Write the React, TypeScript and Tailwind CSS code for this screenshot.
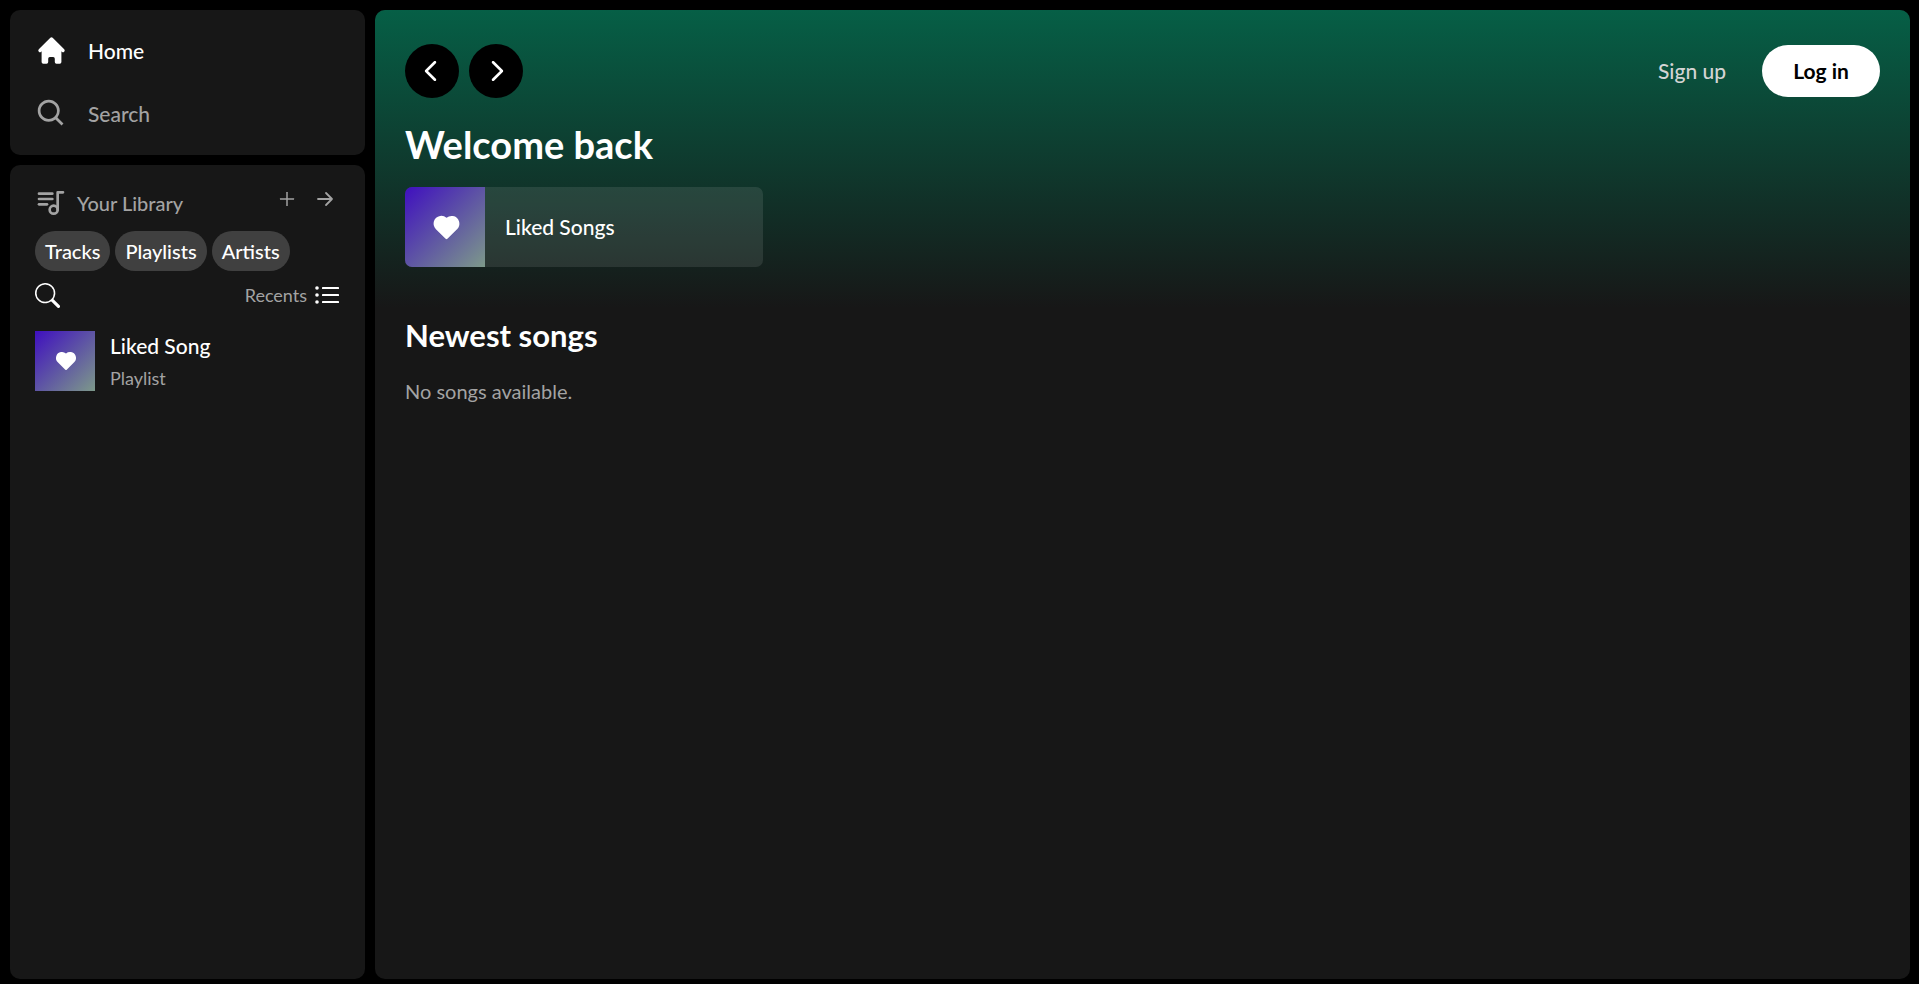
import React from "react";
import { HiHome } from "react-icons/hi";
import { BiSearch } from "react-icons/bi";
import { TbPlaylist, TbHeartFilled } from "react-icons/tb";
import { AiOutlinePlus } from "react-icons/ai";
import { BsSearch } from "react-icons/bs";
import { RxCaretLeft, RxCaretRight } from "react-icons/rx";

const filters = ["Tracks", "Playlists", "Artists"];
const panel = "rounded-[10px] bg-[#171717]";
const cover =
  "flex shrink-0 items-center justify-center bg-linear-to-br/srgb from-[#3f0fbf] to-[#7d998a] pl-[2px]";

function ArrowRight() {
  return (
    <svg viewBox="0 0 20 20" className="size-5" fill="none" stroke="currentColor" strokeWidth="1.8" strokeLinecap="round" strokeLinejoin="round">
      <path d="M3 10h14M11 4l6 6-6 6" />
    </svg>
  );
}

function ListIcon() {
  return (
    <svg viewBox="0 0 25 20" className="h-5 w-[25px]" fill="currentColor">
      <circle cx="2" cy="2" r="1.8" />
      <circle cx="2" cy="9" r="1.8" />
      <circle cx="2" cy="16" r="1.8" />
      <rect x="7" y="1" width="17" height="2" rx="0.6" />
      <rect x="7" y="8" width="17" height="2" rx="0.6" />
      <rect x="7" y="15" width="17" height="2" rx="0.6" />
    </svg>
  );
}

function Sidebar() {
  return (
    <aside className="flex w-[355px] shrink-0 flex-col gap-[10px]">
      <nav className={`${panel} flex flex-col gap-[22px] px-[25px] pt-5 pb-[21px]`}>
        <a href="#home" className="flex h-[41px] items-center gap-5 font-medium text-white">
          <HiHome className="size-[33px]" />
          Home
        </a>
        <a href="#search" className="flex h-[41px] items-center gap-5 font-medium text-[#a3a3a3]">
          <BiSearch className="size-[33px]" />
          Search
        </a>
      </nav>
      <section className={`${panel} min-h-0 grow px-[25px] pt-[22px]`}>
        <div className="flex h-8 items-center text-[#a3a3a3]">
          <TbPlaylist className="size-8" />
          <h2 className="ml-[10px] text-[20px] font-medium">Your Library</h2>
          <div className="mr-[5px] ml-auto flex gap-[18px] pb-2">
            <button aria-label="Add song"><AiOutlinePlus className="size-5" /></button>
            <button aria-label="Expand library"><ArrowRight /></button>
          </div>
        </div>
        <div className="mt-3 flex gap-[5px]">
          {filters.map((name) => (
            <button key={name} className="h-10 rounded-full bg-[#404040] px-[10px] text-[20px] font-medium text-white">
              {name}
            </button>
          ))}
        </div>
        <div className="mt-3 flex h-[25px] items-center justify-between">
          <button aria-label="Search in library" className="text-white"><BsSearch className="size-[25px]" /></button>
          <button className="flex items-center gap-2 text-[18px] text-[#a3a3a3]">
            Recents
            <span className="text-white"><ListIcon /></span>
          </button>
        </div>
        <a href="#liked" className="mt-[23px] flex items-center gap-[15px]">
          <span className={`${cover} size-[60px]`}>
            <TbHeartFilled className="size-6 text-white" />
          </span>
          <span className="flex flex-col gap-[5px]">
            <span className="leading-[30px] font-medium text-white">Liked Song</span>
            <span className="text-[18px] leading-[25px] text-[#a3a3a3]">Playlist</span>
          </span>
        </a>
      </section>
    </aside>
  );
}

export default function App() {
  return (
    <div className="flex h-screen gap-[10px] bg-black pt-[10px] pr-[9px] pb-[5px] pl-[10px] font-['Lato',sans-serif] text-[21px]">
      <Sidebar />
      <main className={`${panel} min-w-0 grow overflow-hidden`}>
        <header className="bg-linear-to-b/srgb from-[#065f46] to-[#171717] px-[30px] pt-[34px] pb-[41px]">
          <div className="flex items-center justify-between">
            <div className="flex gap-[10px] text-white">
              <button aria-label="Back" className="flex size-[54px] items-center justify-center rounded-full bg-black">
                <RxCaretLeft className="size-[44px]" />
              </button>
              <button aria-label="Forward" className="flex size-[54px] items-center justify-center rounded-full bg-black">
                <RxCaretRight className="size-[44px]" />
              </button>
            </div>
            <div className="flex items-center gap-9">
              <button className="font-medium text-[#d4d4d4]">Sign up</button>
              <button className="h-[52px] w-[118px] rounded-full bg-white font-bold text-black">Log in</button>
            </div>
          </div>
          <h1 className="mt-6 text-[38px] leading-[45px] font-bold text-white">Welcome back</h1>
          <a href="#liked" className="mt-5 flex h-20 w-[358px] items-center overflow-hidden rounded-[7px] bg-[#f5f5f5]/10">
            <span className={`${cover} size-20`}>
              <TbHeartFilled className="size-[31px] text-white" />
            </span>
            <span className="ml-5 font-medium text-white">Liked Songs</span>
          </a>
        </header>
        <section className="px-[30px] pt-[5px]">
          <h2 className="text-[31px] leading-[45px] font-bold text-white">Newest songs</h2>
          <p className="mt-[18px] text-[20px] leading-[30px] text-[#a3a3a3]">No songs available.</p>
        </section>
      </main>
    </div>
  );
}
